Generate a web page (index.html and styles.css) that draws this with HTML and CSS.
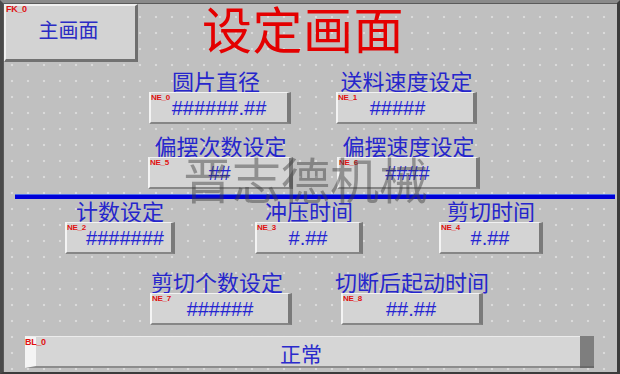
FILE: index.html
```html
<!DOCTYPE html>
<html lang="zh">
<head>
<meta charset="utf-8">
<title>设定画面</title>
<link rel="stylesheet" href="styles.css">
</head>
<body>
<div class="screen">
  <div class="header">
    <div class="btn"><span class="badge badge-fk">FK_0</span>主画面</div>
    <div class="title">设定画面</div>
  </div>

  <div class="row row1">
    <div class="field f-ne0"><div class="label">圆片直径</div><div class="box"><span class="badge">NE_0</span>######.##</div></div>
    <div class="field f-ne1"><div class="label">送料速度设定</div><div class="box"><span class="badge">NE_1</span>#####</div></div>
  </div>

  <div class="row row2">
    <div class="field f-ne5"><div class="label">偏摆次数设定</div><div class="box"><span class="badge">NE_5</span>##</div></div>
    <div class="field f-ne6"><div class="label">偏摆速度设定</div><div class="box"><span class="badge">NE_6</span>####</div></div>
  </div>

  <div class="divider"></div>

  <div class="row row3">
    <div class="field f-ne2"><div class="label">计数设定</div><div class="box"><span class="badge">NE_2</span>#######</div></div>
    <div class="field f-ne3"><div class="label">冲压时间</div><div class="box"><span class="badge">NE_3</span>#.##</div></div>
    <div class="field f-ne4"><div class="label">剪切时间</div><div class="box"><span class="badge">NE_4</span>#.##</div></div>
  </div>

  <div class="row row4">
    <div class="field f-ne7"><div class="label">剪切个数设定</div><div class="box"><span class="badge">NE_7</span>######</div></div>
    <div class="field f-ne8"><div class="label">切断后起动时间</div><div class="box"><span class="badge">NE_8</span>##.##</div></div>
  </div>

  <div class="bar">
    <div class="bar-main"><span class="badge badge-bl">BL_0</span>正常</div>
    <div class="bar-end"></div>
  </div>

  <div class="watermark">晋志德机械</div>
</div>
</body>
</html>
```

FILE: styles.css
```css
html, body {
  margin: 0;
  padding: 0;
  background: #c0c0c0;
}

.screen {
  position: relative;
  width: 620px;
  height: 374px;
  box-sizing: border-box;
  border-style: solid;
  border-width: 3px 3px 2px 3px;
  border-color: #8a8a8a #3c3c3c #3c3c3c #4a4a4a;
  box-shadow: inset 1px 1px 0 #5a5a5a;
  background-color: #c0c0c0;
  background-image: radial-gradient(circle, #dadada 0.9px, rgba(218,218,218,0) 1.6px);
  background-size: 16px 16px;
  background-position: 1px 6px;
  display: flex;
  flex-direction: column;
  font-family: "Noto Sans CJK SC", sans-serif;
}

.header {
  display: flex;
  align-items: flex-start;
  height: 59px;
  flex: none;
}

.btn {
  position: relative;
  margin: 1px 0 0 1px;
  width: 134px;
  height: 58px;
  box-sizing: border-box;
  background: #d3d3d3;
  border-style: solid;
  border-width: 2px 3px 3px 2px;
  border-color: #f0f0f0 #6e6e6e #727272 #f0f0f0;
  display: flex;
  align-items: center;
  justify-content: center;
  padding-bottom: 5px;
  padding-right: 4px;
  font-size: 20px;
  line-height: 24px;
  color: #2a2ac4;
}

.title {
  margin: -4px 0 0 64px;
  height: 56px;
  font-size: 50px;
  line-height: 56px;
  color: #e40000;
  letter-spacing: 0.5px;
  white-space: nowrap;
}

.row {
  display: flex;
  flex: none;
}

.row1 { margin-top: 6px; }
.row2 { margin-top: 9px; }
.row3 { margin-top: -1px; }
.row4 { margin-top: 15px; }

.field {
  display: flex;
  flex-direction: column;
  align-items: center;
  flex: none;
}

.label {
  font-size: 22px;
  line-height: 24px;
  height: 24px;
  color: #2626cc;
  white-space: nowrap;
}

.f-ne0 .label, .f-ne7 .label { margin-right: 8px; }

.box {
  position: relative;
  align-self: stretch;
  height: 32px;
  box-sizing: border-box;
  background: #d4d4d4;
  border-style: solid;
  border-width: 1px 4px 2px 2px;
  border-color: #f2f2f2 #7a7a7a #868686 #f4f4f4;
  display: flex;
  align-items: center;
  justify-content: center;
  font-family: "Liberation Sans", Arial, sans-serif;
  font-size: 20px;
  line-height: 24px;
  color: #2424d2;
}

.badge {
  position: absolute;
  left: 0;
  top: 0;
  font-family: "Liberation Sans", Arial, sans-serif;
  font-weight: bold;
  font-size: 8px;
  line-height: 9px;
  color: #e01010;
  letter-spacing: -0.3px;
}

.badge-fk {
  left: 0;
  top: -1px;
  font-size: 9px;
}

.f-ne0 { width: 142px; margin-left: 146px; }
.f-ne1 { width: 141px; margin-left: 45px; }
.f-ne5 { width: 145px; margin-left: 145px; }
.f-ne6 { width: 143px; margin-left: 44px; }
.f-ne2 { width: 110px; margin-left: 62px; }
.f-ne3 { width: 108px; margin-left: 80px; }
.f-ne4 { width: 104px; margin-left: 76px; }
.f-ne7 { width: 142px; margin-left: 147px; }
.f-ne8 { width: 142px; margin-left: 49px; }

.f-ne1 .box { padding-right: 16px; }
.f-ne2 .box { padding-left: 12px; }

.divider {
  flex: none;
  margin: 6px 0 0 12px;
  width: 600px;
  height: 4px;
  background: #0000d8;
  box-shadow: 0 -1px 0 #4a6ae8;
}

.bar {
  flex: none;
  display: flex;
  margin: 11px 0 0 22px;
  width: 569px;
  height: 32px;
}

.bar-main {
  position: relative;
  flex: 1;
  box-sizing: border-box;
  background: #d6d6d6;
  border-left: 11px solid #f4f4f4;
  border-top: 1px solid #ececec;
  border-bottom: 2px solid #8c8c8c;
  display: flex;
  align-items: center;
  justify-content: center;
  padding-right: 14px;
  padding-top: 2px;
  font-size: 21px;
  line-height: 24px;
  color: #2a2acc;
}

.badge-bl {
  left: -11px;
  top: 1px;
  font-size: 9px;
}

.bar-end {
  flex: none;
  width: 14px;
  background: #7e7e7e;
  border-bottom: 2px solid #6a6a6a;
  box-sizing: border-box;
}

.watermark {
  position: absolute;
  left: 180px;
  top: 150px;
  font-size: 49px;
  line-height: 50px;
  color: rgba(60, 60, 60, 0.45);
  white-space: nowrap;
  pointer-events: none;
}
```
